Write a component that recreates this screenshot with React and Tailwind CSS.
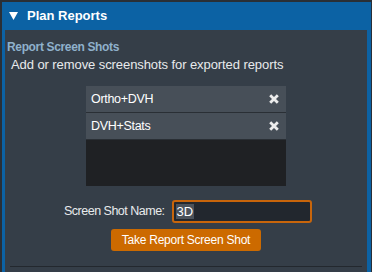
import React from "react";

const shots = ["Ortho+DVH", "DVH+Stats"];

const RemoveIcon = () => (
  <svg width="10" height="10" viewBox="0 0 10 10" className="block">
    <path d="M1.2 1.2 L8.8 8.8 M8.8 1.2 L1.2 8.8" stroke="#ececec" strokeWidth="2.8" />
  </svg>
);

const Caret = () => (
  <svg width="9" height="8" viewBox="0 0 9 8" className="block">
    <path d="M0 0 H9 L4.5 8 Z" fill="#ffffff" />
  </svg>
);

const App = () => {
  return (
    <div className="w-[372px] h-[272px] bg-[#2a2f36] pt-[2px] overflow-hidden" style={{ fontFamily: '"Liberation Sans", Arial, sans-serif' }}>
      <div className="ml-[2px] mr-[1px] h-[280px] bg-[#0c62a4] pl-[3px] pr-[4px]">
        <div className="h-[28px] flex items-center gap-[9px] pl-[4px] text-white font-bold text-[13px]">
          <Caret />
          <span>Plan Reports</span>
        </div>
        <div className="bg-[#353e48] h-full pt-[10px]">
          <div className="pl-[2px] text-[12px] font-bold tracking-[-0.35px] text-[#8fb1cc] leading-[14px]">Report Screen Shots</div>
          <div className="pl-[6px] mt-[3px] text-[13px] tracking-[-0.08px] text-[#e8eaec] leading-[15px]">Add or remove screenshots for exported reports</div>

          <div className="mt-[14px] ml-[81px] w-[200px] h-[100px] bg-[#1f2124] flex flex-col">
            {shots.map((s) => (
              <div key={s} className="h-[27px] border-b border-[#2a2f35] bg-[#474f58] flex items-center justify-between pl-[5px] pr-[7px]">
                <span className="text-[12.5px] tracking-[-0.3px] text-white">{s}</span>
                <RemoveIcon />
              </div>
            ))}
          </div>

          <div className="flex items-center mt-[14px] ml-[59px]">
            <span className="text-[12.5px] tracking-[-0.5px] text-[#e8eaec] mr-[7px]">Screen Shot Name:</span>
            <div className="w-[140px] h-[23px] bg-[#22272e] border-2 border-[#c8650b] rounded-[3px] flex items-center pl-[2px]">
              <span className="text-[13px] text-white bg-[#4b525b] px-[1px] leading-[15px]">3D</span>
            </div>
          </div>
          <div className="flex mt-[6px] ml-[106px]">
            <button className="w-[150px] h-[22px] bg-[#cc6a00] rounded-[3px] text-white text-[12px] tracking-[-0.25px]">Take Report Screen Shot</button>
          </div>
          <div className="mx-[5px] mt-[15px] border-t border-[#23282e]"></div>
        </div>
      </div>
    </div>
  );
};

export default App;
